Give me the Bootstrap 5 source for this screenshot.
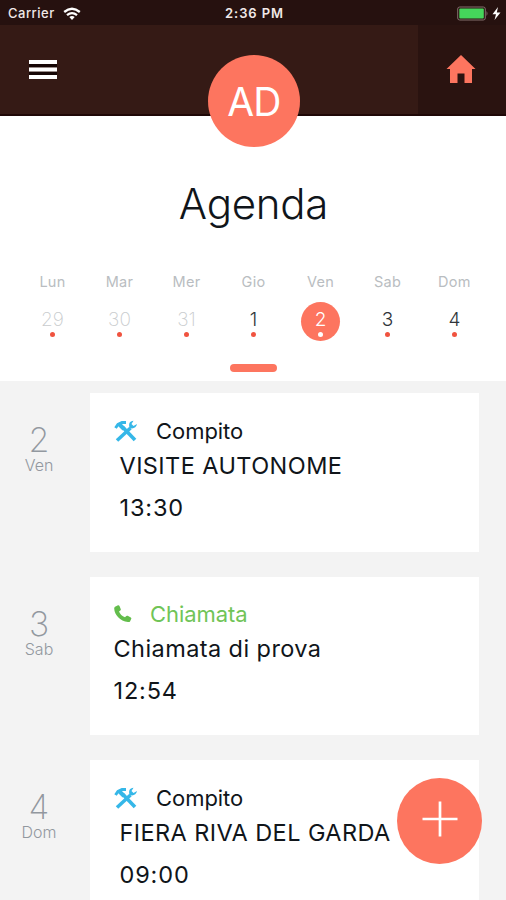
<!DOCTYPE html>
<html lang="it">
<head>
<meta charset="utf-8">
<meta name="viewport" content="width=device-width, initial-scale=1">
<title>Agenda</title>
<link href="https://cdn.jsdelivr.net/npm/bootstrap@5.3.0/dist/css/bootstrap.min.css" rel="stylesheet">
<style>
:root{--coral:#fd755f}
body{font-family:Inter,"Liberation Sans",sans-serif;background:#f3f3f3;color:#10151a}
.screen{height:900px}
.statusbar{height:25px;background:#26110f;color:#f1e9e8;font-size:13px;font-weight:500;letter-spacing:.5px;padding:2px 5px 0 8px}
.statusbar>*{flex:1 1 0}
.clock{letter-spacing:.9px}
.topbar{height:91px;background:#351a15;border-bottom:2px solid #1f0807}
.menu{padding:35px 0 0 29px}
.home{width:88px;background:#2a1310;padding:29px 0 0 28px}
.avatar{position:absolute;left:208px;top:55px;width:92px;height:92px;font-size:39px;letter-spacing:-.8px;padding-top:3px}
.coral{background:var(--coral);color:#fff}
.calendar{height:265px;padding:63px 18px 0 19px}
.title{font-size:42px;line-height:50px;letter-spacing:-.25px;font-weight:350;margin:0}
.week{margin-top:43px}
.weekday{font-size:14.5px;line-height:20px;letter-spacing:.3px;color:#b9bdc1}
.daynum{width:39px;height:39px;margin-top:10px;font-size:19px;line-height:20px;padding-top:8px;font-weight:300;color:#30353a}
.faded{color:#c9ccce;font-weight:200}
.daynum.coral{color:#fff}
.dot{width:5px;height:5px;background:#f0533f;margin-top:2px}
.coral .dot{background:#fff}
.handle{width:47px;height:8px;margin-top:23px}
.agenda{padding-top:12px}
.entry{margin-bottom:25px}
.when{width:78px;padding-top:30px;color:#92989f}
.when b{font-size:34px;line-height:33px;font-weight:200;display:block}
.when span{font-size:16px;line-height:18px;font-weight:300;display:block}
.event{width:389px;height:158.5px;margin-left:12px;padding:21.5px 24px 0}
.kind{font-size:22px;line-height:32px;letter-spacing:-.05px;color:#10151a}
.kind svg{flex:none}
.what,.hour{font-size:23.5px;line-height:32px;white-space:nowrap;letter-spacing:.42px}
.what{margin-top:3px}
.hour{margin-top:10px;letter-spacing:.85px}
.task .kind{gap:18px}
.task .what,.task .hour{padding-left:5.5px}
.call .kind{gap:18px;color:#70c457}
.call .what,.call .hour{margin-left:-.5px}
.add{position:absolute;left:397px;top:778px;width:85px;height:86px;border:0}
.add svg{margin-top:-5px}
</style>
</head>
<body>
<main class="screen position-relative overflow-hidden">
  <header>
    <div class="statusbar d-flex align-items-center">
      <div class="d-flex align-items-center"><span>Carrier</span>
        <svg class="ms-2" width="18" height="14" viewBox="0 0 18 14" fill="none" stroke="#fff" stroke-width="2.3"><path d="M1.200 5Q9-1.600 16.800 5M4 8.200Q9 4 14 8.200"/><path d="M6.300 10Q9 8 11.700 10L9 13Z" fill="#fff" stroke="none"/></svg>
      </div>
      <div class="clock text-center fw-semibold">2:36 PM</div>
      <div class="d-flex justify-content-end align-items-center">
        <svg width="44" height="15" viewBox="0 0 44 15"><rect x=".7" y="1" width="27.600" height="13" rx="2" fill="none" stroke="#84706e"/><rect x="2.300" y="2.500" width="24.500" height="10" rx="1" fill="#45d65b"/><path d="M29.500 5q2 2.500 0 5z" fill="#84706e"/><path d="M41 1L35.500 8.300H39L37.500 14L43.500 6.500H39.800Z" fill="#fff"/></svg>
      </div>
    </div>
    <div class="topbar d-flex justify-content-between">
      <div class="menu"><svg class="d-block" width="28" height="19" viewBox="0 0 28 19"><path d="M0 4h28v3H0zM0 12h28v3H0z" fill="#160605"/><path d="M0 0h28v4H0zM0 7.500h28v4H0zM0 15h28v4H0z" fill="#fff"/></svg></div>
      <div class="home"><svg class="d-block" width="30" height="30" viewBox="0 0 30 30"><path d="M15 1L29.500 15H26V29H18.500V19.500H11.500V29H4V15H.5Z" fill="#fd755f"/></svg></div>
    </div>
    <div class="avatar coral rounded-circle d-flex align-items-center justify-content-center">AD</div>
  </header>
  <section class="calendar bg-white">
    <h1 class="title text-center">Agenda</h1>
    <div class="week row row-cols-7 g-0 d-flex flex-nowrap text-center">
      <div class="col d-flex flex-column align-items-center"><div class="weekday">Lun</div><div class="daynum faded d-flex flex-column align-items-center">29<i class="dot rounded-circle"></i></div></div>
      <div class="col d-flex flex-column align-items-center"><div class="weekday">Mar</div><div class="daynum faded d-flex flex-column align-items-center">30<i class="dot rounded-circle"></i></div></div>
      <div class="col d-flex flex-column align-items-center"><div class="weekday">Mer</div><div class="daynum faded d-flex flex-column align-items-center">31<i class="dot rounded-circle"></i></div></div>
      <div class="col d-flex flex-column align-items-center"><div class="weekday">Gio</div><div class="daynum d-flex flex-column align-items-center">1<i class="dot rounded-circle"></i></div></div>
      <div class="col d-flex flex-column align-items-center"><div class="weekday">Ven</div><div class="daynum coral rounded-circle d-flex flex-column align-items-center">2<i class="dot rounded-circle"></i></div></div>
      <div class="col d-flex flex-column align-items-center"><div class="weekday">Sab</div><div class="daynum d-flex flex-column align-items-center">3<i class="dot rounded-circle"></i></div></div>
      <div class="col d-flex flex-column align-items-center"><div class="weekday">Dom</div><div class="daynum d-flex flex-column align-items-center">4<i class="dot rounded-circle"></i></div></div>
    </div>
    <div class="handle coral rounded-pill mx-auto"></div>
  </section>
  <section class="agenda">
    <article class="entry task d-flex">
      <div class="when text-center"><b>2</b><span>Ven</span></div>
      <div class="event bg-white">
        <div class="kind d-flex align-items-center"><svg width="24" height="24" viewBox="0 0 24 24" fill="none" stroke="#35b7e8"><path d="M9 8.500L21 21" stroke-width="3.600"/><path d="M1.500 9L4 5.500L8 3.500H12" stroke-width="3"/><path d="M5 5L10 10" stroke-width="4"/><path d="M3 21.500L16.500 9" stroke-width="3.500"/><path d="M19.500 1.800C15.500 2 14.500 5 15.500 8.500C18 10.500 22.500 9 23 5L19.500 7L17.500 5Z" fill="#35b7e8" stroke="none"/></svg><span>Compito</span></div>
        <div class="what">VISITE AUTONOME</div><div class="hour">13:30</div>
      </div>
    </article>
    <article class="entry call d-flex">
      <div class="when text-center"><b>3</b><span>Sab</span></div>
      <div class="event bg-white">
        <div class="kind d-flex align-items-center"><svg width="18" height="18" viewBox="0 0 18 18"><path d="M1 1.800L4 .3Q5 0 5.500 1L6.800 4.200Q7 5 6.300 5.500L5 6.600Q6.500 10.500 11 12.300L12.300 11Q13 10.400 13.700 10.800L16.800 12.400Q17.700 13 17.300 13.800L16 16.500Q15.500 17.300 14 17C6 16 .5 10 .2 3.500Q.2 2.200 1 1.800Z" fill="#63bd4c"/></svg><span>Chiamata</span></div>
        <div class="what">Chiamata di prova</div><div class="hour">12:54</div>
      </div>
    </article>
    <article class="entry task d-flex">
      <div class="when text-center"><b>4</b><span>Dom</span></div>
      <div class="event bg-white">
        <div class="kind d-flex align-items-center"><svg width="24" height="24" viewBox="0 0 24 24" fill="none" stroke="#35b7e8"><path d="M9 8.500L21 21" stroke-width="3.600"/><path d="M1.500 9L4 5.500L8 3.500H12" stroke-width="3"/><path d="M5 5L10 10" stroke-width="4"/><path d="M3 21.500L16.500 9" stroke-width="3.500"/><path d="M19.500 1.800C15.500 2 14.500 5 15.500 8.500C18 10.500 22.500 9 23 5L19.500 7L17.500 5Z" fill="#35b7e8" stroke="none"/></svg><span>Compito</span></div>
        <div class="what">FIERA RIVA DEL GARDA</div><div class="hour">09:00</div>
      </div>
    </article>
  </section>
  <button class="add coral rounded-circle p-0" type="button" aria-label="Aggiungi"><svg class="d-block mx-auto" width="36" height="36" viewBox="0 0 36 36"><path d="M18 .5V35.500M.5 18H35.500" stroke="#fff" stroke-width="2.700"/></svg></button>
</main>
<script src="https://cdn.jsdelivr.net/npm/bootstrap@5.3.0/dist/js/bootstrap.bundle.min.js"></script>
</body>
</html>
